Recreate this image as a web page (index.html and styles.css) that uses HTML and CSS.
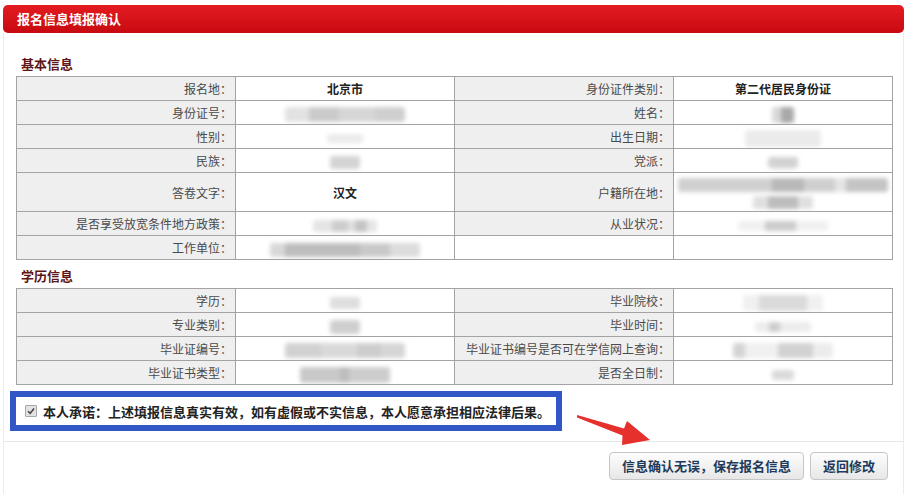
FILE: index.html
```html
<!DOCTYPE html>
<html lang="zh-CN">
<head>
<meta charset="utf-8">
<title>报名信息填报确认</title>
<link rel="stylesheet" href="styles.css">
</head>
<body>
<div class="page">
  <div class="panel">
    <div class="panel-head">报名信息填报确认</div>
    <div class="panel-main">
      <div class="panel-body">
        <div class="section-title">基本信息</div>
        <table class="info">
          <colgroup><col><col><col><col></colgroup>
          <tr>
            <td class="lbl">报名地：</td>
            <td class="val strong">北京市</td>
            <td class="lbl">身份证件类别：</td>
            <td class="val strong">第二代居民身份证</td>
          </tr>
          <tr>
            <td class="lbl">身份证号：</td>
            <td class="val"><span class="blur b-id"></span></td>
            <td class="lbl">姓名：</td>
            <td class="val"><span class="blur b-name"></span></td>
          </tr>
          <tr>
            <td class="lbl">性别：</td>
            <td class="val"><span class="blur b-sex"></span></td>
            <td class="lbl">出生日期：</td>
            <td class="val"><span class="blur b-birth"></span></td>
          </tr>
          <tr>
            <td class="lbl">民族：</td>
            <td class="val"><span class="blur b-nation"></span></td>
            <td class="lbl">党派：</td>
            <td class="val"><span class="blur b-party"></span></td>
          </tr>
          <tr class="tall">
            <td class="lbl">答卷文字：</td>
            <td class="val strong">汉文</td>
            <td class="lbl">户籍所在地：</td>
            <td class="val"><span class="blur b-addr1"></span><br><span class="blur b-addr2"></span></td>
          </tr>
          <tr>
            <td class="lbl">是否享受放宽条件地方政策：</td>
            <td class="val"><span class="blur b-policy"></span></td>
            <td class="lbl">从业状况：</td>
            <td class="val"><span class="blur b-job"></span></td>
          </tr>
          <tr>
            <td class="lbl">工作单位：</td>
            <td class="val"><span class="blur b-work"></span></td>
            <td class="plain"></td>
            <td class="plain"></td>
          </tr>
        </table>

        <div class="section-title second">学历信息</div>
        <table class="info">
          <colgroup><col><col><col><col></colgroup>
          <tr>
            <td class="lbl">学历：</td>
            <td class="val"><span class="blur b-edu"></span></td>
            <td class="lbl">毕业院校：</td>
            <td class="val"><span class="blur b-school"></span></td>
          </tr>
          <tr>
            <td class="lbl">专业类别：</td>
            <td class="val"><span class="blur b-major"></span></td>
            <td class="lbl">毕业时间：</td>
            <td class="val"><span class="blur b-gradtime"></span></td>
          </tr>
          <tr>
            <td class="lbl">毕业证编号：</td>
            <td class="val"><span class="blur b-certno"></span></td>
            <td class="lbl">毕业证书编号是否可在学信网上查询：</td>
            <td class="val"><span class="blur b-chsi"></span></td>
          </tr>
          <tr>
            <td class="lbl">毕业证书类型：</td>
            <td class="val"><span class="blur b-certtype"></span></td>
            <td class="lbl">是否全日制：</td>
            <td class="val"><span class="blur b-fulltime"></span></td>
          </tr>
        </table>

        <div class="pledge">
          <span class="check"><svg viewBox="0 0 10 10" width="10" height="10"><path d="M2 5.2 L4.2 7.4 L8 2.6" fill="none" stroke="#444" stroke-width="1.6"/></svg></span>
          <span class="pledge-text">本人承诺：上述填报信息真实有效，如有虚假或不实信息，本人愿意承担相应法律后果。</span>
        </div>
      </div>
      <div class="panel-foot">
        <button class="btn" type="button">信息确认无误，保存报名信息</button>
        <button class="btn" type="button">返回修改</button>
      </div>
    </div>
  </div>
  <svg class="arrow" viewBox="0 0 908 494" width="908" height="494">
    <polygon points="577,415 624,428.5 627,421 650,440 622,445 622.5,435.5 577,417.5" fill="#e6302c"/>
  </svg>
</div>
</body>
</html>
```

FILE: styles.css
```css
html, body {
  margin: 0;
  padding: 0;
  background: #ffffff;
}

body {
  font-family: "Noto Sans CJK SC", "Liberation Sans", sans-serif;
  font-size: 12px;
  color: #444;
}

.page {
  position: relative;
  width: 908px;
  height: 494px;
  overflow: hidden;
  padding: 5px 0 0 3px;
  box-sizing: border-box;
}

.panel {
  width: 901px;
  display: flex;
  flex-direction: column;
  height: 489px;
}

.panel-head {
  height: 28px;
  line-height: 28px;
  padding-left: 14px;
  border-radius: 5px;
  background: linear-gradient(#e31c21, #c70a10);
  color: #ffffff;
  font-size: 13px;
  font-weight: bold;
}

.panel-main {
  flex: 1;
  border-left: 1px solid #ebebeb;
  border-right: 1px solid #ebebeb;
  display: flex;
  flex-direction: column;
}

.panel-body {
  padding: 21px 10px 10px 12px;
}

.section-title {
  height: 20px;
  line-height: 20px;
  padding-left: 5px;
  margin-bottom: 2px;
  font-size: 13px;
  font-weight: bold;
  color: #5e1616;
}

.section-title.second {
  margin-top: 6px;
}

.info {
  width: 100%;
  table-layout: fixed;
  border-collapse: collapse;
}

.info col {
  width: 25%;
}

.info td {
  border: 1px solid #a3a3a3;
  padding: 0;
  height: 23px;
  line-height: 23px;
  white-space: nowrap;
  overflow: hidden;
}

.info tr.tall td {
  height: 38px;
}

.info td.lbl {
  background: #efefef;
  text-align: right;
  padding-right: 3px;
  color: #4a4a4a;
}

.info td.val {
  text-align: center;
  background: #ffffff;
}

.info td.strong {
  font-weight: bold;
  color: #222;
}

.info td.plain {
  background: #ffffff;
}

.info tr.tall td.val {
  line-height: 15px;
}

.blur {
  display: inline-block;
  vertical-align: middle;
  filter: blur(2.2px);
  border-radius: 3px;
}

.b-id { width: 120px; height: 15px; background: linear-gradient(90deg, #e2e2e2 0 20%, #cbcbcb 20% 45%, #d6d6d6 45% 75%, #cfcfcf 75%); }
.b-name { width: 22px; height: 16px; background: linear-gradient(90deg, #d8d8d8 0 40%, #a9a9a9 40%); }
.b-sex { width: 36px; height: 9px; background: #ebebeb; }
.b-birth { width: 76px; height: 17px; background: #ebebeb; }
.b-nation { width: 30px; height: 13px; background: #d4d4d4; }
.b-party { width: 30px; height: 11px; background: #d2d2d2; box-shadow: 0 7px 0 -5px #e6e6e6; }
.b-addr1 { width: 210px; height: 14px; background: linear-gradient(90deg, #d0d0d0 0 45%, #b8b8b8 45% 60%, #cfcfcf 60% 75%, #e4e4e4 75% 80%, #c4c4c4 80%); }
.b-addr2 { width: 60px; height: 13px; margin-top: 1px; background: linear-gradient(90deg, #e0e0e0 0 25%, #bdbdbd 25% 75%, #e0e0e0 75%); }
.b-policy { width: 64px; height: 12px; background: linear-gradient(90deg, #e4e4e4 0 30%, #cdcdcd 30% 55%, #e0e0e0 55% 65%, #c4c4c4 65% 85%, #e6e6e6 85%); }
.b-job { width: 90px; height: 10px; background: linear-gradient(90deg, #f0f0f0 0 30%, #cccccc 30% 65%, #f0f0f0 65%); }
.b-work { width: 150px; height: 14px; background: linear-gradient(90deg, #d8d8d8 0 10%, #bdbdbd 10% 60%, #c9c9c9 60% 80%, #dcdcdc 80%); }
.b-edu { width: 30px; height: 12px; background: #dedede; }
.b-school { width: 80px; height: 16px; background: linear-gradient(90deg, #f0f0f0 0 20%, #dadada 20% 80%, #f0f0f0 80%); }
.b-major { width: 30px; height: 14px; background: #cfcfcf; }
.b-gradtime { width: 56px; height: 10px; background: linear-gradient(90deg, #ececec 0 25%, #cdcdcd 25% 45%, #ececec 45%); }
.b-certno { width: 120px; height: 15px; background: linear-gradient(90deg, #d1d1d1 0 30%, #d9d9d9 30% 60%, #cdcdcd 60% 80%, #d6d6d6 80%); }
.b-chsi { width: 100px; height: 15px; background: linear-gradient(90deg, #d4d4d4 0 12%, #f0f0f0 12% 45%, #d2d2d2 45% 80%, #ececec 80%); }
.b-certtype { width: 90px; height: 16px; background: linear-gradient(90deg, #c9c9c9 0 45%, #bdbdbd 45% 55%, #cdcdcd 55%); }
.b-fulltime { width: 22px; height: 10px; background: #dadada; }

.pledge {
  margin-top: 6px;
  margin-left: -6px;
  width: 552px;
  height: 40px;
  box-sizing: border-box;
  border: 6px solid #3156c6;
  padding-left: 9px;
  display: flex;
  align-items: center;
  gap: 6px;
  font-size: 13px;
  font-weight: bold;
  color: #222;
}

.check {
  width: 10px;
  height: 10px;
  border: 1px solid #a8a8a8;
  background: #e2e2e2;
  border-radius: 1px;
  display: flex;
  flex-shrink: 0;
}

.check svg {
  display: block;
}

.panel-foot {
  flex: 1;
  border-top: 1px solid #e6e6e6;
  padding: 10px 15px 0 0;
  display: flex;
  justify-content: flex-end;
  align-items: flex-start;
  gap: 6px;
}

.btn {
  height: 28px;
  padding: 0 12px;
  border: 1px solid #c6c6c6;
  border-radius: 4px;
  background: linear-gradient(#fdfdfd, #e7e7e7);
  font-family: "Noto Sans CJK SC", "Liberation Sans", sans-serif;
  font-size: 13px;
  font-weight: bold;
  color: #1f3b5c;
  line-height: 26px;
}

.arrow {
  position: absolute;
  left: 0;
  top: 0;
  pointer-events: none;
}
```
